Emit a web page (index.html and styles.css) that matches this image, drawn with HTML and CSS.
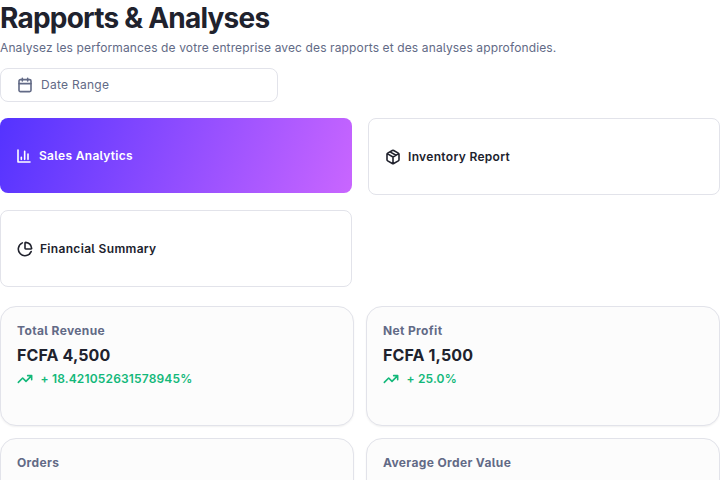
FILE: index.html
```html
<!DOCTYPE html>
<html lang="fr">
<head>
<meta charset="utf-8">
<title>Rapports &amp; Analyses</title>
<link rel="stylesheet" href="styles.css">
</head>
<body>
<main>
  <header>
    <h1><span>Rapports &amp; Analyses</span></h1>
    <p class="subtitle"><span>Analysez les performances de votre entreprise avec des rapports et des analyses approfondies.</span></p>
  </header>
  <button class="date" type="button">
    <svg class="icon" viewBox="0 0 24 24"><path d="M8 2v4M16 2v4M3 10h18"/><rect x="3" y="4" width="18" height="18" rx="2"/></svg>
    <span>Date Range</span>
  </button>
  <nav class="tabs">
    <a class="tab active"><svg class="icon" viewBox="0 0 24 24"><path d="M3 3v18h18M13 17V5M18 17V9M8 17v-3"/></svg><span>Sales Analytics</span></a>
    <a class="tab"><svg class="icon" viewBox="0 0 24 24"><path d="M11 21.73a2 2 0 0 0 2 0l7-4A2 2 0 0 0 21 16V8a2 2 0 0 0-1-1.73l-7-4a2 2 0 0 0-2 0l-7 4A2 2 0 0 0 3 8v8a2 2 0 0 0 1 1.73zM12 22V12M3.3 7 12 12l8.7-5M7.5 4.27l9 5.15"/></svg><span>Inventory Report</span></a>
    <a class="tab"><svg class="icon" viewBox="0 0 24 24"><path d="M21 12c.55 0 1-.45.95-1A10 10 0 0 0 13 2.05c-.55-.05-1 .4-1 .95v8a1 1 0 0 0 1 1zM21.21 15.89A10 10 0 1 1 8 2.83"/></svg><span>Financial Summary</span></a>
  </nav>
  <section class="stats">
    <article class="card">
      <h2>Total Revenue</h2>
      <p class="value">FCFA 4,500</p>
      <p class="trend"><svg class="icon" viewBox="0 0 24 24"><path d="m22 7-8.5 8.5-5-5L2 17M16 7h6v6"/></svg><span>+ 18.421052631578945%</span></p>
    </article>
    <article class="card">
      <h2>Net Profit</h2>
      <p class="value">FCFA 1,500</p>
      <p class="trend"><svg class="icon" viewBox="0 0 24 24"><path d="m22 7-8.5 8.5-5-5L2 17M16 7h6v6"/></svg><span>+ 25.0%</span></p>
    </article>
    <article class="card"><h2>Orders</h2></article>
    <article class="card"><h2>Average Order Value</h2></article>
  </section>
</main>
</body>
</html>
```
FILE: styles.css
```css
* { box-sizing: border-box; }
html { height: 100%; overflow: hidden; }
body {
  margin: 0;
  height: 100%;
  overflow: hidden;
  background: #fff;
  color: #20222d;
  font: 400 12px/20px Inter, "Liberation Sans", sans-serif;
  font-feature-settings: "cv05";
}
main { height: 100%; overflow: hidden; }
h1, h2, p { margin: 0; }
h1 {
  font-size: 28px;
  line-height: 36px;
  font-weight: 700;
  letter-spacing: -0.78px;
  white-space: nowrap;
  font-feature-settings: normal;
}
.subtitle {
  margin-top: 2px;
  color: #626a86;
  letter-spacing: 0.125px;
  white-space: nowrap;
}
.icon {
  flex: none;
  width: 16px;
  height: 16px;
  fill: none;
  stroke: currentColor;
  stroke-width: 2.4;
  stroke-linecap: round;
  stroke-linejoin: round;
}
.date {
  display: flex;
  align-items: center;
  gap: 8px;
  width: 278px;
  height: 34px;
  margin-top: 10px;
  padding: 0 16px;
  border: 1px solid #e2e3ea;
  border-radius: 8px;
  background: #fff;
  color: #626a86;
  font: inherit;
  font-feature-settings: inherit;
  letter-spacing: 0.28px;
}
.tabs {
  display: grid;
  grid-template-columns: 1fr 1fr;
  grid-template-rows: 77px 77px;
  gap: 15px 16px;
  margin-top: 16px;
}
.tab {
  display: flex;
  align-items: center;
  gap: 7px;
  padding: 0 16px;
  border: 1px solid #e2e3ea;
  border-radius: 8px;
  font-weight: 600;
  letter-spacing: 0.32px;
}
.tab.active {
  height: 75px;
  padding: 0 16px 0 15.5px;
  gap: 7.5px;
  border: 0;
  background: linear-gradient(110deg, #5433ff, #c966ff);
  color: #fff;
}
.stats {
  display: grid;
  grid-template-columns: 1fr 1fr;
  grid-auto-rows: 120px;
  gap: 12px;
  margin-top: 19px;
}
.card {
  padding: 14px 16px;
  border: 1px solid #e2e3ea;
  border-radius: 16px;
  background: #fcfcfc;
  box-shadow: 0 1px 2px rgba(0, 0, 0, 0.06);
}
.card h2 {
  font-size: 12px;
  line-height: 20px;
  font-weight: 700;
  letter-spacing: 0.36px;
  color: #626a86;
}
.value {
  margin-top: 2px;
  font-size: 16px;
  line-height: 24px;
  font-weight: 700;
  letter-spacing: 0.12px;
}
.trend {
  display: flex;
  align-items: center;
  gap: 7.5px;
  margin-top: 2px;
  color: #13b87a;
  font-weight: 600;
  letter-spacing: 0.16px;
}
```
